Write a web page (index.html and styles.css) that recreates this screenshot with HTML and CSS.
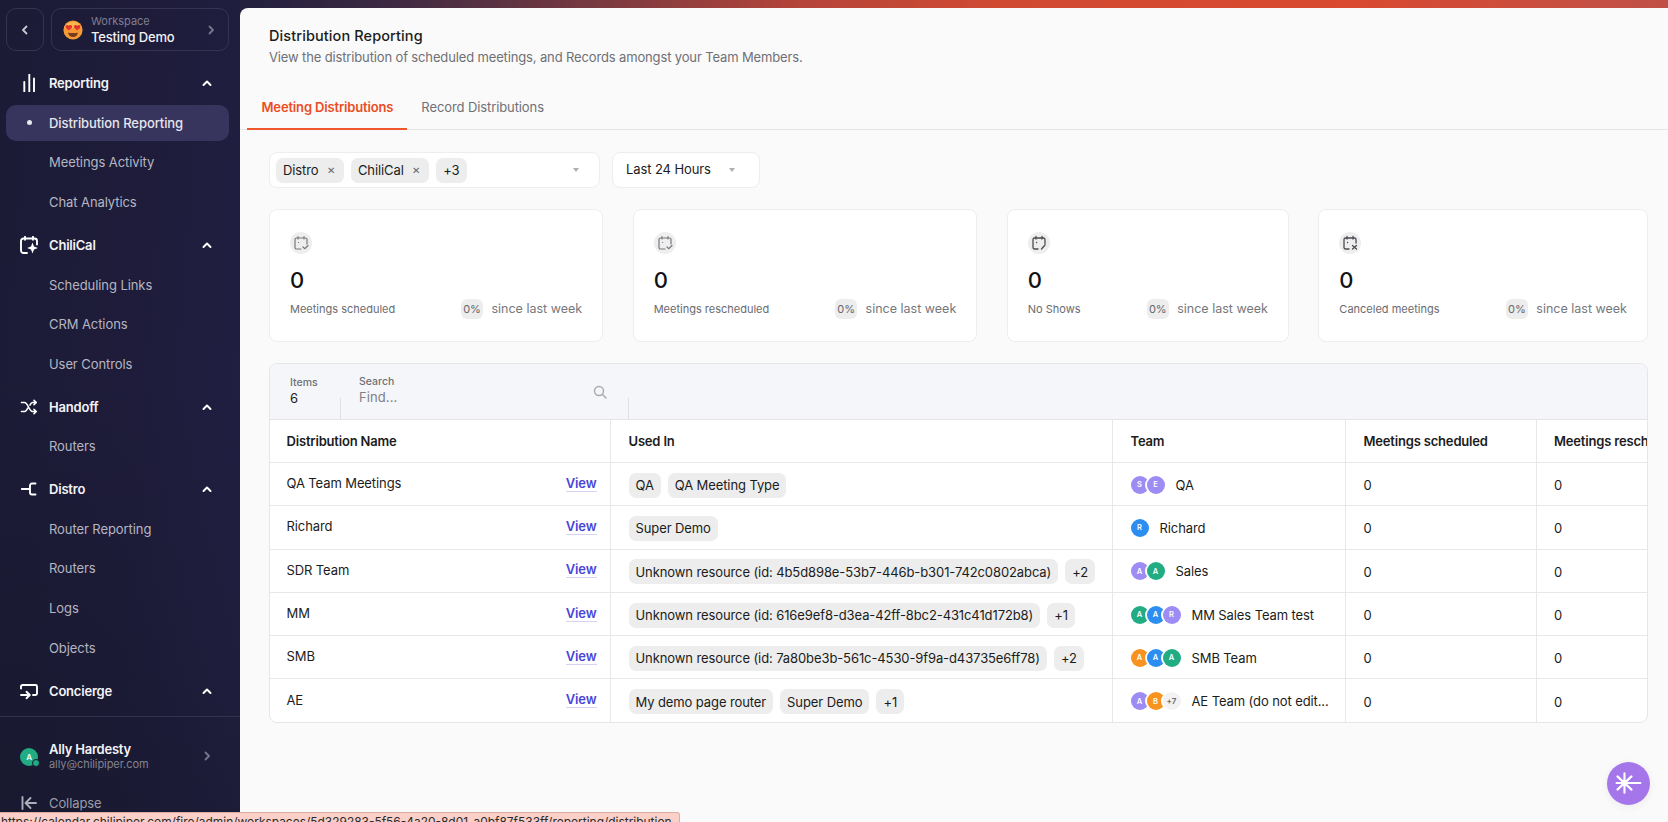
FILE: index.html
```html
<!DOCTYPE html>
<html lang="en">
<head>
<meta charset="utf-8">
<title>Distribution Reporting</title>
<link rel="stylesheet" href="styles.css">
</head>
<body>
<aside class="sidebar">
  <div class="top-row">
    <button class="back-btn"><svg width="10" height="10" viewBox="0 0 10 10"><path d="M6.500 1.500 3 5l3.500 3.500" class="chev-path"/></svg></button>
    <div class="workspace">
      <svg class="emoji" width="20" height="20" viewBox="0 0 20 20">
        <circle cx="10" cy="10" r="9.600" fill="#f59a34"/>
        <path d="M1 8a9.600 9.600 0 0 1 18 0z" fill="#f8b84a"/>
        <path d="M5.800 10.600 2.900 7.800c-1-1.300.1-3 1.500-2.800.7.100 1.100.5 1.400 1 .3-.5.800-.9 1.500-1 1.400-.2 2.500 1.500 1.500 2.800z" fill="#e0322e"/>
        <path d="M14.200 10.600 11.300 7.800c-1-1.300.1-3 1.500-2.800.7.100 1.100.5 1.400 1 .3-.5.800-.9 1.500-1 1.400-.2 2.500 1.500 1.500 2.800z" fill="#e0322e"/>
        <path d="M5 12.500c1.500.7 8.500.7 10 0-.4 3-2.500 4.500-5 4.500s-4.600-1.500-5-4.500z" fill="#7a3b1c"/>
      </svg>
      <div class="ws-text">
        <span class="ws-label">Workspace</span>
        <span class="ws-name">Testing Demo</span>
      </div>
      <svg class="ws-chev" width="10" height="10" viewBox="0 0 10 10"><path d="M3.500 1.500 7 5 3.500 8.500" class="chev-path"/></svg>
    </div>
  </div>

  <nav class="nav">
    <div class="nav-group">
      <div class="nav-head">
        <svg class="nav-icon" width="18" height="18" viewBox="0 0 18 18"><path d="M4.300 17.500V8M9.300 17.500V0.500M14 17.500V4.500" class="icon-line"/></svg>
        <span>Reporting</span>
        <svg class="caret-up" width="12" height="12" viewBox="0 0 12 12"><path d="M2.500 8 6 4.500 9.500 8" class="up-path"/></svg>
      </div>
      <a class="nav-item active"><span class="dot"></span>Distribution Reporting</a>
      <a class="nav-item">Meetings Activity</a>
      <a class="nav-item">Chat Analytics</a>
    </div>
    <div class="nav-group">
      <div class="nav-head">
        <svg class="nav-icon" width="18" height="18" viewBox="0 0 18 18"><path d="M5 .8v3M13 .8v3M3.500 2.500h11A2.500 2.500 0 0 1 17 5v3.500M3.500 2.500A2.500 2.500 0 0 0 1 5v9.500A2.500 2.500 0 0 0 3.500 17H7" class="icon-line"/><path d="M12.500 6.500l1.500 3.900 3.900 1.500-3.900 1.500-1.500 4.100-1.500-4.100-3.900-1.500 3.900-1.500z" fill="#fff"/></svg>
        <span>ChiliCal</span>
        <svg class="caret-up" width="12" height="12" viewBox="0 0 12 12"><path d="M2.500 8 6 4.500 9.500 8" class="up-path"/></svg>
      </div>
      <a class="nav-item">Scheduling Links</a>
      <a class="nav-item">CRM Actions</a>
      <a class="nav-item">User Controls</a>
    </div>
    <div class="nav-group">
      <div class="nav-head">
        <svg class="nav-icon" width="18" height="18" viewBox="0 0 18 18"><path d="M1.500 4.500h3c3.500 0 4.500 9 8 9H16M1.500 13.500h3c1.500 0 2.500-1.800 3.300-3.500M10 7c.7-1.300 1.500-2.500 2.500-2.500H16M14 2.300l2.300 2.200L14 6.700M14 11.300l2.300 2.200-2.300 2.200" class="icon-line-thin"/></svg>
        <span>Handoff</span>
        <svg class="caret-up" width="12" height="12" viewBox="0 0 12 12"><path d="M2.500 8 6 4.500 9.500 8" class="up-path"/></svg>
      </div>
      <a class="nav-item">Routers</a>
    </div>
    <div class="nav-group">
      <div class="nav-head">
        <svg class="nav-icon" width="18" height="18" viewBox="0 0 18 18"><path d="M1.800 9H9M15.500 3.500h-3.500a2 2 0 0 0-2 2v7a2 2 0 0 0 2 2h3.500" class="icon-line"/></svg>
        <span>Distro</span>
        <svg class="caret-up" width="12" height="12" viewBox="0 0 12 12"><path d="M2.500 8 6 4.500 9.500 8" class="up-path"/></svg>
      </div>
      <a class="nav-item">Router Reporting</a>
      <a class="nav-item">Routers</a>
      <a class="nav-item">Logs</a>
      <a class="nav-item">Objects</a>
    </div>
    <div class="nav-group">
      <div class="nav-head">
        <svg class="nav-icon" width="18" height="18" viewBox="0 0 18 18"><path d="M1 6.500V4.500A1.500 1.500 0 0 1 2.500 3h13A1.500 1.500 0 0 1 17 4.500v7a1.500 1.500 0 0 1-1.500 1.500H13M1 13h8M6.500 9.800 9.800 13l-3.300 3.200" class="icon-line"/></svg>
        <span>Concierge</span>
        <svg class="caret-up" width="12" height="12" viewBox="0 0 12 12"><path d="M2.500 8 6 4.500 9.500 8" class="up-path"/></svg>
      </div>
    </div>
  </nav>

  <div class="account">
    <div class="account-avatar">A<span class="presence"></span></div>
    <div class="account-text">
      <span class="account-name">Ally Hardesty</span>
      <span class="account-mail">ally@chilipiper.com</span>
    </div>
    <svg class="ws-chev" width="10" height="10" viewBox="0 0 10 10"><path d="M3.500 1.500 7 5 3.500 8.500" class="chev-path"/></svg>
  </div>
  <div class="collapse">
    <svg class="nav-icon" width="18" height="18" viewBox="0 0 18 18"><path d="M2.500 3v12M16 9H6.500M10.500 4 5.500 9l5 5" class="collapse-line"/></svg>
    <span>Collapse</span>
  </div>
</aside>

<main class="main">
  <header class="page-head">
    <h1>Distribution Reporting</h1>
    <p>View the distribution of scheduled meetings, and Records amongst your Team Members.</p>
  </header>

  <div class="tabs">
    <a class="tab tab-active">Meeting Distributions</a>
    <a class="tab">Record Distributions</a>
  </div>

  <div class="filters">
    <div class="select select-wide">
      <span class="tag">Distro <span class="tag-x">✕</span></span>
      <span class="tag">ChiliCal <span class="tag-x">✕</span></span>
      <span class="tag">+3</span>
      <span class="caret"></span>
    </div>
    <div class="select select-date">
      <span class="date-text">Last 24 Hours</span>
      <span class="caret"></span>
    </div>
  </div>

  <section class="cards">
    <article class="card">
      <span class="card-icon"><svg width="16" height="16" viewBox="0 0 16 16"><path d="M5 1.500v2.500M11 1.500v2.500M3.500 3h9A1.500 1.500 0 0 1 14 4.500V9M3.500 3A1.500 1.500 0 0 0 2 4.500v8A1.500 1.500 0 0 0 3.500 14H8M10 12l1.700 1.700L15 10.500M5.500 7.500h.1" class="cal-line"/></svg></span>
      <strong class="card-value">0</strong>
      <div class="card-foot"><span class="card-label">Meetings scheduled</span><span class="trend"><span class="pct">0%</span>since last week</span></div>
    </article>
    <article class="card">
      <span class="card-icon"><svg width="16" height="16" viewBox="0 0 16 16"><path d="M5 1.500v2.500M11 1.500v2.500M3.500 3h9A1.500 1.500 0 0 1 14 4.500V9M3.500 3A1.500 1.500 0 0 0 2 4.500v8A1.500 1.500 0 0 0 3.500 14H8M10 12l1.700 1.700L15 10.500M5.500 7.500h.1" class="cal-line"/></svg></span>
      <strong class="card-value">0</strong>
      <div class="card-foot"><span class="card-label">Meetings rescheduled</span><span class="trend"><span class="pct">0%</span>since last week</span></div>
    </article>
    <article class="card">
      <span class="card-icon"><svg width="16" height="16" viewBox="0 0 16 16"><path d="M5 1.500v2.500M11 1.500v2.500M3.500 3h9A1.500 1.500 0 0 1 14 4.500V9M3.500 3A1.500 1.500 0 0 0 2 4.500v8A1.500 1.500 0 0 0 3.500 14H7M10.500 14l3.500-4M5.500 7.500h.1" class="cal-dark"/></svg></span>
      <strong class="card-value">0</strong>
      <div class="card-foot"><span class="card-label">No Shows</span><span class="trend"><span class="pct">0%</span>since last week</span></div>
    </article>
    <article class="card">
      <span class="card-icon"><svg width="16" height="16" viewBox="0 0 16 16"><path d="M5 1.500v2.500M11 1.500v2.500M3.500 3h9A1.500 1.500 0 0 1 14 4.500V8M3.500 3A1.500 1.500 0 0 0 2 4.500v8A1.500 1.500 0 0 0 3.500 14H7M10.500 10.500l4 3.500M14.500 10.500l-4 3.500M5.500 7.500h.1" class="cal-dark"/></svg></span>
      <strong class="card-value">0</strong>
      <div class="card-foot"><span class="card-label">Canceled meetings</span><span class="trend"><span class="pct">0%</span>since last week</span></div>
    </article>
  </section>

  <section class="panel">
    <div class="toolbar">
      <div class="tool-items">
        <span class="tool-label">Items</span>
        <span class="tool-value">6</span>
      </div>
      <div class="tool-search">
        <span class="tool-label">Search</span>
        <span class="tool-find">Find...</span>
        <svg class="search-icon" width="14" height="14" viewBox="0 0 14 14"><circle cx="6" cy="6" r="4.500" class="search-line"/><path d="M9.500 9.500 13 13" class="search-line"/></svg>
      </div>
    </div>
    <table class="grid">
      <colgroup>
        <col class="col-name"><col class="col-used"><col class="col-team"><col class="col-sched"><col class="col-resch">
      </colgroup>
      <thead>
        <tr><th>Distribution Name</th><th>Used In</th><th>Team</th><th>Meetings scheduled</th><th>Meetings rescheduled</th></tr>
      </thead>
      <tbody>
        <tr>
          <td><div class="name-cell"><span>QA Team Meetings</span><a class="view">View</a></div></td>
          <td><div class="chips"><span class="chip">QA</span><span class="chip">QA Meeting Type</span></div></td>
          <td><div class="team"><div class="avatars"><span class="av purple">S</span><span class="av purple">E</span></div><span>QA</span></div></td>
          <td>0</td><td>0</td>
        </tr>
        <tr>
          <td><div class="name-cell"><span>Richard</span><a class="view">View</a></div></td>
          <td><div class="chips"><span class="chip">Super Demo</span></div></td>
          <td><div class="team"><div class="avatars"><span class="av blue">R</span></div><span>Richard</span></div></td>
          <td>0</td><td>0</td>
        </tr>
        <tr>
          <td><div class="name-cell"><span>SDR Team</span><a class="view">View</a></div></td>
          <td><div class="chips"><span class="chip">Unknown resource (id: 4b5d898e-53b7-446b-b301-742c0802abca)</span><span class="chip">+2</span></div></td>
          <td><div class="team"><div class="avatars"><span class="av purple">A</span><span class="av green">A</span></div><span>Sales</span></div></td>
          <td>0</td><td>0</td>
        </tr>
        <tr>
          <td><div class="name-cell"><span>MM</span><a class="view">View</a></div></td>
          <td><div class="chips"><span class="chip">Unknown resource (id: 616e9ef8-d3ea-42ff-8bc2-431c41d172b8)</span><span class="chip">+1</span></div></td>
          <td><div class="team"><div class="avatars"><span class="av green">A</span><span class="av blue">A</span><span class="av purple">R</span></div><span>MM Sales Team test</span></div></td>
          <td>0</td><td>0</td>
        </tr>
        <tr>
          <td><div class="name-cell"><span>SMB</span><a class="view">View</a></div></td>
          <td><div class="chips"><span class="chip">Unknown resource (id: 7a80be3b-561c-4530-9f9a-d43735e6ff78)</span><span class="chip">+2</span></div></td>
          <td><div class="team"><div class="avatars"><span class="av orange">A</span><span class="av blue">A</span><span class="av green">A</span></div><span>SMB Team</span></div></td>
          <td>0</td><td>0</td>
        </tr>
        <tr>
          <td><div class="name-cell"><span>AE</span><a class="view">View</a></div></td>
          <td><div class="chips"><span class="chip">My demo page router</span><span class="chip">Super Demo</span><span class="chip">+1</span></div></td>
          <td><div class="team"><div class="avatars"><span class="av purple">A</span><span class="av orange">B</span><span class="av more">+7</span></div><span>AE Team (do not edit...</span></div></td>
          <td>0</td><td>0</td>
        </tr>
      </tbody>
    </table>
  </section>
</main>

<button class="fab" aria-label="Assistant"><svg width="34" height="34" viewBox="0 0 34 34"><path d="M13 17h18M13 6v22M5 9.500l16 15M21 9.500l-16 15M4 17h9" class="fab-line"/><circle cx="13" cy="17" r="3.500" fill="#fff"/></svg></button>
<div class="status-url">https://calendar.chilipiper.com/fire/admin/workspaces/5d329283-5f56-4a20-8d01-a0bf87f533ff/reporting/distribution</div>
</body>
</html>
```

FILE: styles.css
```css
* { box-sizing: border-box; }
html, body { height: 100%; }
body {
  margin: 0;
  height: 822px;
  overflow: hidden;
  display: flex;
  font-family: Inter, "Liberation Sans", sans-serif;
  font-size: 13px;
  letter-spacing: -0.1px;
  color: #1b1c20;
  background: linear-gradient(90deg, #1e1d3b 0, #24213f 260px, #3f2a42 400px, #7a3a40 600px, #b5443a 800px, #d04a32 1000px, #d94a30 1350px, #c05048 1668px);
}

/* Sidebar */
.sidebar {
  width: 240px;
  flex: none;
  height: 822px;
  display: flex;
  flex-direction: column;
  background:
    linear-gradient(180deg, rgba(18, 20, 34, 0) 45%, rgba(18, 20, 34, 0.35) 100%),
    linear-gradient(95deg, #1c1b36 0, #1e1c3a 55%, #222044 100%);
  color: #fff;
}
.top-row {
  display: flex;
  gap: 7px;
  padding: 8px 11px 0 6px;
}
.back-btn {
  width: 38px;
  height: 43px;
  border: 1px solid #35344f;
  border-radius: 10px;
  background: transparent;
  padding: 0;
  display: flex;
  align-items: center;
  justify-content: center;
  color: #c9c9d2;
}
.chev-path { fill: none; stroke: currentColor; stroke-width: 1.800; stroke-linecap: round; stroke-linejoin: round; }
.workspace {
  flex: 1;
  height: 43px;
  border: 1px solid #35344f;
  border-radius: 10px;
  display: flex;
  align-items: center;
  padding-left: 11px;
  padding-right: 12px;
}
.emoji { flex: none; }
.ws-text { flex: 1; display: flex; flex-direction: column; margin-left: 8px; }
.ws-label { font-size: 11px; line-height: 14px; color: #7f7e92; letter-spacing: 0; }
.ws-name { font-size: 13px; line-height: 18px; font-weight: 500; color: #f1f1f4; letter-spacing: -0.17px; }
.ws-chev { color: #77768a; flex: none; }

.nav { margin-top: 12.400px; display: flex; flex-direction: column; gap: 3.400px; }
.nav-group { display: flex; flex-direction: column; }
.nav-head, .nav-item {
  height: 39.600px;
  display: flex;
  align-items: center;
  font-size: 13px;
  letter-spacing: -0.08px;
}
.nav-head { padding-left: 20px; font-weight: 600; color: #f4f4f7; padding-right: 27px; letter-spacing: -0.2px; }
.nav-head span { flex: 1; margin-left: 11px; }
.nav-icon { flex: none; }
.icon-line { fill: none; stroke: #fff; stroke-width: 1.900; stroke-linecap: round; stroke-linejoin: round; }
.icon-line-thin { fill: none; stroke: #fff; stroke-width: 1.600; stroke-linecap: round; stroke-linejoin: round; }
.up-path { fill: none; stroke: #fff; stroke-width: 2; stroke-linecap: round; stroke-linejoin: round; }
.caret-up { flex: none; }
.nav-item { padding-left: 49px; color: #b6b6c2; font-weight: 400; position: relative; }
.nav-item.active {
  margin: 2px 11px 2px 6px;
  height: 35.600px;
  padding-left: 43px;
  background: #37345e;
  border-radius: 10px;
  color: #e6e6ec;
  font-weight: 500;
}
.dot {
  position: absolute;
  left: 21px;
  top: 50%;
  width: 5px;
  height: 5px;
  margin-top: -2.500px;
  border-radius: 50%;
  background: #e8e8ee;
}

.account {
  margin-top: 6px;
  border-top: 1px solid #33324c;
  height: 67px;
  display: flex;
  align-items: flex-start;
  padding: 22px 27px 0 20px;
}
.account-avatar {
  position: relative;
  width: 18px;
  height: 18px;
  margin-top: 9px;
  border-radius: 50%;
  background: #21ac84;
  color: #e9fff8;
  font-size: 8px;
  font-weight: 600;
  display: flex;
  align-items: center;
  justify-content: center;
  flex: none;
}
.presence {
  position: absolute;
  right: -2px;
  bottom: -1px;
  width: 8px;
  height: 8px;
  border-radius: 50%;
  background: #21ac84;
  border: 1px solid #1b1a33;
}
.account-text { flex: 1; display: flex; flex-direction: column; margin-left: 11px; margin-top: 2px; }
.account-name { font-size: 13px; line-height: 16px; font-weight: 600; color: #f4f4f7; letter-spacing: -0.22px; }
.account-mail { font-size: 11px; line-height: 15px; color: #83838f; letter-spacing: -0.07px; }
.account .ws-chev { margin-top: 12px; margin-right: 1px; }
.collapse {
  display: flex;
  align-items: center;
  padding-left: 20px;
  margin-top: 10px;
  height: 20px;
  color: #9c9ca8;
  font-size: 13px;
}
.collapse span { margin-left: 11px; }
.collapse-line { fill: none; stroke: #aeaeb9; stroke-width: 1.900; stroke-linecap: round; stroke-linejoin: round; }

/* Main */
.main {
  flex: 1;
  min-width: 0;
  margin-top: 8px;
  background: #fafafa;
  border-top-left-radius: 8px;
  overflow: hidden;
  display: flex;
  flex-direction: column;
}
.page-head { padding: 19px 20px 0 29px; height: 77px; flex: none; }
.page-head h1 { margin: 0; font-size: 14.500px; line-height: 18px; font-weight: 500; color: #1b1c20; letter-spacing: 0.1px; }
.page-head p { margin: 3px 0 0; font-size: 13px; line-height: 18px; color: #6f7076; letter-spacing: -0.14px; }

.tabs { display: flex; height: 45px; flex: none; padding-left: 7px; border-bottom: 1px solid #e5e5e6; }
.tab {
  height: 45px;
  display: flex;
  align-items: center;
  padding: 0 14px 2px;
  font-size: 13px;
  color: #6f7076;
  letter-spacing: -0.1px;
}
.tab-active { color: #ea4d23; font-weight: 600; border-bottom: 2px solid #f0562c; padding: 0 14px 0 14.500px; letter-spacing: -0.15px; }

.filters { display: flex; gap: 12px; padding: 22px 20px 0 29px; flex: none; }
.select {
  height: 36px;
  background: #fff;
  border: 1px solid #ededee;
  border-radius: 8px;
  display: flex;
  align-items: center;
  font-size: 13px;
}
.select-wide { width: 331px; padding-left: 6px; gap: 7px; }
.select-date { width: 148px; padding-left: 13px; }
.date-text { margin-bottom: 2px; }
.tag {
  height: 25px;
  border-radius: 7px;
  background: #ededed;
  padding: 0 7.500px 0 7px;
  display: flex;
  align-items: center;
  gap: 8px;
}
.tag-x { font-size: 10px; color: #66666c; margin-right: 2px; }
.caret {
  width: 0;
  height: 0;
  border-left: 3.500px solid transparent;
  border-right: 3.500px solid transparent;
  border-top: 4.500px solid #b0b0b4;
}
.select-wide .caret { margin-left: auto; margin-right: 20px; }
.select-date .caret { margin-left: 18px; }

.cards {
  display: grid;
  grid-template-columns: 334fr 344.500fr 282fr 329.500fr;
  gap: 29.500px;
  padding: 20.500px 20px 0 29px;
  flex: none;
}
.card {
  height: 133px;
  background: #fff;
  border: 1px solid #ededee;
  border-radius: 8px;
  padding: 22px 20px 0;
  display: flex;
  flex-direction: column;
  align-items: flex-start;
}
.card-icon {
  width: 22px;
  height: 22px;
  border-radius: 50%;
  background: #eeeeef;
  display: flex;
  align-items: center;
  justify-content: center;
}
.cal-line { fill: none; stroke: #77787c; stroke-width: 1.200; stroke-linecap: round; stroke-linejoin: round; }
.cal-dark { fill: none; stroke: #4a4b50; stroke-width: 1.300; stroke-linecap: round; stroke-linejoin: round; }
.card-value { font-size: 22px; line-height: 28px; font-weight: 500; margin-top: 12px; color: #111216; }
.card-foot { width: 100%; display: flex; align-items: center; justify-content: space-between; margin-top: 5px; }
.card-label { font-size: 11px; color: #6a6b70; letter-spacing: 0; }
.trend { display: flex; align-items: center; gap: 8.500px; font-size: 12.500px; color: #77787c; letter-spacing: 0; }
.pct {
  width: 22px;
  height: 20px;
  border-radius: 6px;
  background: #ededed;
  font-size: 11px;
  color: #66676c;
  display: flex;
  align-items: center;
  justify-content: center;
  letter-spacing: -0.1px;
}

.panel {
  margin: 21px 20px 0 29px;
  border: 1px solid #e6e6e8;
  border-radius: 8px;
  background: #fff;
  overflow: hidden;
  flex: none;
}
.toolbar {
  height: 56px;
  background: #f5f6f9;
  display: flex;
  border-bottom: 1px solid #e4e4e6;
}
.tool-items { width: 71px; padding: 12px 0 0 20px; position: relative; display: flex; flex-direction: column; }
.tool-items::after, .tool-search::after {
  content: "";
  position: absolute;
  right: 0;
  bottom: 0;
  height: 21px;
  width: 1px;
  background: #dfe0e3;
}
.tool-label { font-size: 10.500px; line-height: 14px; color: #6f7076; font-weight: 500; letter-spacing: 0; }
.tool-value { font-size: 13px; line-height: 16px; color: #1b1c20; }
.tool-search { width: 288px; padding: 11px 0 0 18px; position: relative; display: flex; flex-direction: column; }
.tool-find { font-size: 13px; line-height: 16px; color: #7f8085; letter-spacing: 0.1px; }
.search-icon { position: absolute; right: 22px; top: 21px; }
.search-line { fill: none; stroke: #a9aaae; stroke-width: 1.500; stroke-linecap: round; }

.grid { table-layout: fixed; width: 1470px; border-collapse: collapse; }
.col-name { width: 340.500px; }
.col-used { width: 502px; }
.col-team { width: 233px; }
.col-sched { width: 190.500px; }
.col-resch { width: 204px; }
.grid th {
  height: 43px;
  padding: 0 17.500px;
  text-align: left;
  font-size: 13px;
  font-weight: 600;
  letter-spacing: -0.18px;
  color: #1b1c20;
  border-bottom: 1px solid #e8e8e9;
  border-right: 1px solid #e8e8e9;
  white-space: nowrap;
}
.grid td {
  height: 43.300px;
  padding: 2px 17.500px 0;
  font-size: 13px;
  color: #1b1c20;
  border-bottom: 1px solid #e8e8e9;
  border-right: 1px solid #e8e8e9;
  white-space: nowrap;
}
.grid th:first-child, .grid td:first-child { padding-left: 16.500px; padding-right: 16.500px; }
.grid tbody tr:last-child td { border-bottom: none; }
.name-cell { display: flex; justify-content: space-between; align-items: center; margin-top: -4px; margin-right: -3px; }
.view {
  color: #4a45d8;
  font-weight: 600;
  border-bottom: 1.500px solid #d5d2f4;
  line-height: 16px;
}
.chips { display: flex; gap: 7px; }
.chip {
  height: 25px;
  padding: 0 7px;
  border-radius: 7px;
  background: #ededed;
  display: flex;
  align-items: center;
}
.team { display: flex; align-items: center; gap: 11px; margin-top: -1px; }
.avatars { display: flex; }
.av {
  width: 18px;
  height: 18px;
  border-radius: 50%;
  color: #fff;
  font-size: 7.500px;
  font-weight: 600;
  letter-spacing: 0;
  display: flex;
  align-items: center;
  justify-content: center;
  position: relative;
  margin-left: -2px;
  box-shadow: -2px 0 0 0 #fff;
}
.av:first-child { margin-left: 0; box-shadow: none; }
.purple { background: #9d8cf3; }
.blue { background: #2b8ef0; }
.green { background: #21ac84; }
.orange { background: #f7931e; }
.more { background: #f2f2f3; color: #66676c; font-size: 8px; }

.fab {
  position: fixed;
  left: 1606.500px;
  top: 761.500px;
  width: 43px;
  height: 43px;
  border: none;
  padding: 0;
  border-radius: 50%;
  background: #a576ea;
  box-shadow: 0 2px 10px rgba(0, 0, 0, 0.06);
  display: flex;
  align-items: center;
  justify-content: center;
}
.fab svg { width: 30px; height: 30px; }
.fab-line { fill: none; stroke: #fff; stroke-width: 2.400; stroke-linecap: round; }

.status-url {
  position: fixed;
  left: 0;
  top: 812px;
  width: 680px;
  height: 20px;
  padding: 0 0 0 1px;
  background: #fbd0c8;
  border: 1px solid #dcaca3;
  border-left: none;
  border-radius: 0 3px 0 0;
  font-size: 11.950px;
  line-height: 18px;
  letter-spacing: 0;
  color: #2a2a2a;
  white-space: nowrap;
  overflow: hidden;
}
```
